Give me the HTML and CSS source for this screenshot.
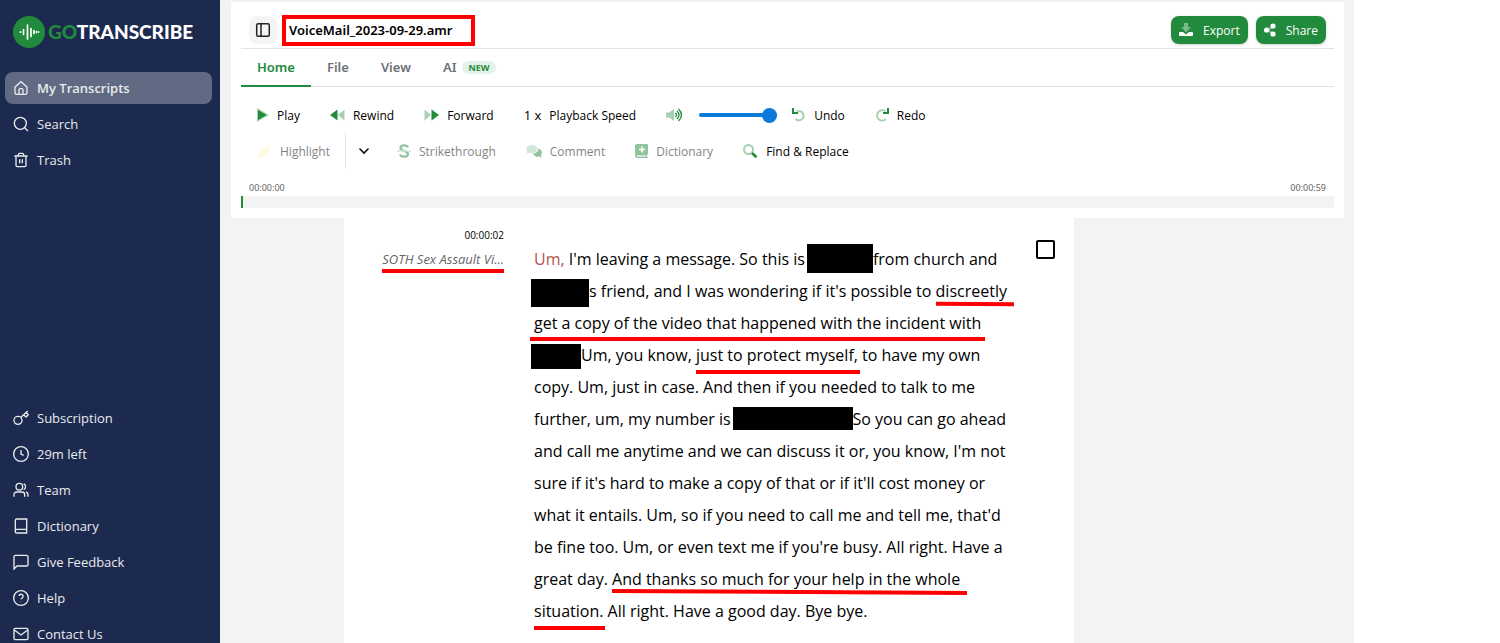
FILE: index.html
```
<!DOCTYPE html>
<html lang="en">
<head>
    <meta charset="UTF-8">
    <meta name="viewport" content="width=device-width, initial-scale=1.0">
    <title>VoiceMail_2023-09-29.amr - GoTranscribe</title>
    <link rel="stylesheet" href="styles.css">
</head>

<body>
    <aside class="sidebar">
        <a class="logo" href="#">
            <svg width="32" height="32" viewBox="0 0 32 32">
                <circle cx="16" cy="16" r="16" fill="#218a3c"/>
                <path d="M7.500 15.800v.4M10.500 13.500v5M14.500 9v14M18 12.500v8M21 14.500v3M23.500 15.500v1M25.500 15.900v.2" stroke="#fff" stroke-width="1.700" stroke-linecap="round"/>
            </svg>
            <span class="logo-text"><span class="go">GO</span>TRANSCRIBE</span>
        </a>
        <nav class="menu">
            <a class="active" href="#">
                <svg viewBox="0 0 24 24"><path d="M3 10.500 12 2.500l9 8V19a2.500 2.500 0 0 1-2.500 2.500h-13A2.500 2.500 0 0 1 3 19z"/><path d="M9 21v-6a2 2 0 0 1 2-2h2a2 2 0 0 1 2 2v6"/></svg>
                My Transcripts
            </a>
            <a href="#">
                <svg viewBox="0 0 24 24"><circle cx="11" cy="11" r="9"/><path d="m17.500 17.500 5 5"/></svg>
                Search
            </a>
            <a href="#">
                <svg viewBox="0 0 24 24"><path d="M2 6h20M4.500 6v14a2 2 0 0 0 2 2h11a2 2 0 0 0 2-2V6M8 6V4a2 2 0 0 1 2-2h4a2 2 0 0 1 2 2v2M10 11v6M14 11v6"/></svg>
                Trash
            </a>
        </nav>
        <nav class="menu bottom">
            <a href="#">
                <svg viewBox="0 0 24 24"><circle cx="7.500" cy="15.500" r="6"/><path d="M12 11 22 1.500M16 7l3.500 3.500L23 7l-3.500-3.500"/></svg>
                Subscription
            </a>
            <a href="#">
                <svg viewBox="0 0 24 24"><circle cx="12" cy="12" r="11"/><path d="M12 6v6l4 2"/></svg>
                29m left
            </a>
            <a href="#">
                <svg viewBox="0 0 24 24"><circle cx="9.500" cy="7" r="5"/><path d="M1.500 22v-3a4 4 0 0 1 4-4h8a4 4 0 0 1 4 4v3M16 2.500a5 5 0 0 1 0 9M22.500 22v-3a4 4 0 0 0-3-4"/></svg>
                Team
            </a>
            <a href="#">
                <svg viewBox="0 0 24 24"><path d="M3.500 20V4A2.500 2.500 0 0 1 6 1.500h14.500v21H6A2.500 2.500 0 0 1 6 17h14.500"/></svg>
                Dictionary
            </a>
            <a href="#">
                <svg viewBox="0 0 24 24"><path d="M22.500 16a2 2 0 0 1-2 2H6l-4.500 4.500V4a2 2 0 0 1 2-2h17a2 2 0 0 1 2 2z"/></svg>
                Give Feedback
            </a>
            <a href="#">
                <svg viewBox="0 0 24 24"><circle cx="12" cy="12" r="11"/><path d="M9 9a3 3 0 0 1 6 1c0 2-3 2.500-3 4M12 17.500v.5"/></svg>
                Help
            </a>
            <a href="#">
                <svg viewBox="0 0 24 24"><rect x="1.500" y="3.500" width="21" height="17" rx="2"/><path d="m2 6 10 7.500L22 6"/></svg>
                Contact Us
            </a>
        </nav>
    </aside>

    <main class="content">
        <header class="panel">
            <div class="title-row">
                <button class="toggle" aria-label="Toggle sidebar">
                    <svg width="16" height="16" viewBox="0 0 16 16" fill="none" stroke="#222" stroke-width="1.500"><rect x="1.700" y="1.700" width="12.600" height="12.600" rx="1.500"/><path d="M6 2v12"/></svg>
                </button>
                <h1 class="file-name">VoiceMail_2023-09-29.amr</h1>
                <div class="actions">
                    <button class="btn">
                        <svg width="14" height="14" viewBox="0 0 14 14" fill="#fff"><path opacity=".4" d="M5 0h4v4h3L7 9.500 2 4h3z"/><path d="M1 9h3l3 2.500L10 9h3a1 1 0 0 1 1 1v2a1 1 0 0 1-1 1H1a1 1 0 0 1-1-1v-2a1 1 0 0 1 1-1z"/></svg>
                        Export
                    </button>
                    <button class="btn">
                        <svg width="12" height="14" viewBox="0 0 12 14" fill="#fff"><path opacity=".4" d="m3 6 6-4 1 2-6 4zm0 2 6 4 1-2-6-4z"/><circle cx="2.600" cy="7" r="2.600"/><circle cx="9" cy="3" r="2.600"/><circle cx="9" cy="11" r="2.600"/></svg>
                        Share
                    </button>
                </div>
            </div>

            <nav class="tabs">
                <a class="current" href="#">Home</a>
                <a href="#">File</a>
                <a href="#">View</a>
                <a href="#">AI <span class="badge">NEW</span></a>
            </nav>

            <div class="toolbar">
                <div class="tools">
                    <button>
                        <svg width="12" height="14" viewBox="0 0 12 14"><path fill="#a6d0b1" d="M0 0l12 7-12 7z"/><path fill="#218a3c" d="M1 2 9.500 7 1 12z"/></svg>
                        Play
                    </button>
                    <button>
                        <svg width="15" height="12" viewBox="0 0 15 12"><path fill="#a6d0b1" d="M14.500 .5v11L8 6z"/><path fill="#218a3c" d="M7.500 .5v11L0 6z"/></svg>
                        Rewind
                    </button>
                    <button>
                        <svg width="15" height="12" viewBox="0 0 15 12"><path fill="#a6d0b1" d="M.5 .5v11L7 6z"/><path fill="#218a3c" d="M7.500 .5v11L15 6z"/></svg>
                        Forward
                    </button>
                    <button><span class="rate">1 x</span> Playback Speed</button>
                    <label class="volume">
                        <svg width="17" height="14" viewBox="0 0 17 14"><path fill="#a6d0b1" d="M0 4.500h3L8 1v12L3 9.500H0z"/><path fill="none" stroke="#218a3c" stroke-width="1.300" d="M9.500 5q2 2 0 4M11 3q4 4 0 8M12.500 1q6 6 0 12"/></svg>
                        <input type="range" min="0" max="100" value="100" aria-label="Volume">
                    </label>
                    <button>
                        <svg width="14" height="14" viewBox="0 0 14 14" fill="none" stroke-width="2"><path stroke="#a6d0b1" d="M4.500 3.300h4a4.700 4.700 0 1 1-5 7.700"/><path stroke="#218a3c" d="M1 0v5h5"/></svg>
                        Undo
                    </button>
                    <button>
                        <svg width="14" height="14" viewBox="0 0 14 14" fill="none" stroke-width="2"><path stroke="#a6d0b1" d="M10.500 3.300A5.200 5.200 0 1 0 11 11"/><path stroke="#218a3c" d="M13 0v5H8"/></svg>
                        Redo
                    </button>
                </div>
                <div class="tools">
                    <button disabled>
                        <svg width="15" height="14" viewBox="0 0 15 14"><path fill="#fffbc8" d="M3 7 12 1l2 2-5 8-5 0z"/><path fill="#fff6a0" d="m3 8 4 4-6 1z"/></svg>
                        Highlight
                    </button>
                    <button class="more" aria-label="Highlight colours">
                        <svg width="12" height="8" viewBox="0 0 12 8" fill="none" stroke="#111" stroke-width="1.600"><path d="m1.500 1.500 4.500 4.500 4.500-4.500"/></svg>
                    </button>
                    <button disabled>
                        <svg width="14" height="14" viewBox="0 0 14 14" fill="none"><path stroke="#218a3c" stroke-width="2.200" d="M11 3.500C10 .5 3.500 .5 3.500 4c0 3.500 7.500 2.500 7.500 6 0 3.500-7 3.500-8 .5"/><path stroke="#a6d0b1" stroke-width="1.500" d="M0 7h14"/></svg>
                        Strikethrough
                    </button>
                    <button disabled>
                        <svg width="16" height="14" viewBox="0 0 16 14"><path fill="#218a3c" d="M7 9.500C11 9 12.500 7 12.300 4.500 16 5.500 17 9 14.800 11l1.200 2.500-3-1C10 13.200 8 12 7 9.500z"/><path fill="#a6d0b1" d="M5.700 1C9 1 11.300 2.800 11.300 5S9 9 5.700 9L3 8.700.5 9.500l.8-2C-1.300 4.500 1 1 5.700 1z"/></svg>
                        Comment
                    </button>
                    <button disabled>
                        <svg width="13" height="14" viewBox="0 0 13 14"><path fill="#218a3c" d="M2.500 0H12a1 1 0 0 1 1 1v9l-1 1v2h1v1H2.500A2.500 2.500 0 0 1 0 11.500v-9A2.500 2.500 0 0 1 2.500 0z"/><path fill="#a6d0b1" d="M2.500 11H11v2H2.500a1 1 0 0 1 0-2z"/><path stroke="#fff" stroke-width="1.600" d="M7 2.500v6M4 5.500h6"/></svg>
                        Dictionary
                    </button>
                    <button>
                        <svg width="15" height="14" viewBox="0 0 15 14" fill="none"><circle cx="5.500" cy="5.500" r="4.500" stroke="#a6d0b1" stroke-width="2"/><path stroke="#218a3c" stroke-width="2.600" d="m9 9 4.500 4.300"/></svg>
                        Find &amp; Replace
                    </button>
                </div>
            </div>

            <div class="timeline">
                <div class="times"><span>00:00:00</span><span>00:00:59</span></div>
                <div class="track"></div>
            </div>
        </header>

        <section class="transcript">
            <div class="speaker">
                <time>00:00:02</time>
                <div class="line name">SOTH Sex Assault Vi...</div>
            </div>
            <p class="text">
                <span class="filler">Um,</span> I'm leaving a message. So this is<span class="redact person"></span>from church and<br>
                <span class="redact start friend"></span>s friend, and I was wondering if it's possible to <span class="line tilt">discreetly</span><br>
                <span class="line wide">get a copy of the video that happened with the incident with</span><br>
                <span class="redact start other"></span>Um, you know, <span class="line low">just to protect myself,</span> to have my own<br>
                copy. Um, just in case. And then if you needed to talk to me<br>
                further, um, my number is<span class="redact phone"></span>So you can go ahead<br>
                and call me anytime and we can discuss it or, you know, I'm not<br>
                sure if it's hard to make a copy of that or if it'll cost money or<br>
                what it entails. Um, so if you need to call me and tell me, that'd<br>
                be fine too. Um, or even text me if you're busy. All right. Have a<br>
                great day. <span class="line tilt">And thanks so much for your help in the whole</span><br>
                <span class="line low">situation.</span> All right. Have a good day. Bye bye.
            </p>
            <input class="done" type="checkbox" aria-label="Mark paragraph as checked">
        </section>
    </main>
</body>
</html>
```
FILE: styles.css
```
*{
    box-sizing: border-box;
}
body{
    display: flex;
    height: 100vh;
    margin: 0;
    overflow: hidden;
    background-color: #fff;
    color: #000;
    font-family: "Open Sans", "Noto Sans", sans-serif;
}
a{
    color: inherit;
    text-decoration: none;
}
button{
    display: flex;
    align-items: center;
    border: 0;
    padding: 0;
    background: none;
    color: inherit;
    font-family: inherit;
}
svg{
    flex: none;
}
/*sidebar styles*/
.sidebar{
    display: flex;
    flex-direction: column;
    flex: none;
    width: 220px;
    padding: 16px 8px 0 5px;
    overflow: hidden;
    background-color: #1d2a4f;
    color: #e8eaed;
}
.logo{
    display: flex;
    align-items: center;
    gap: 3px;
    height: 32px;
    margin: 0 0 24px 8px;
}
.logo-text{
    color: #fff;
    font-family: Lato, sans-serif;
    font-size: 19px;
    font-weight: 900;
    line-height: 32px;
}
.go{
    color: #218a3c;
}
.menu{
    display: flex;
    flex-direction: column;
    gap: 4px;
}
.menu a{
    display: flex;
    align-items: center;
    gap: 8px;
    height: 32px;
    padding: 0 8px;
    border-radius: 8px;
    font-size: 13px;
}
.menu svg{
    width: 16px;
    height: 16px;
    fill: none;
    stroke: currentColor;
    stroke-width: 2;
}
.menu .active{
    background-color: #606b83;
    font-weight: 600;
}
.bottom{
    margin-top: auto;
    margin-bottom: -7px;
}
/*header styles*/
.content{
    display: flex;
    flex-direction: column;
    flex: 1;
    margin-right: 146px;
    padding: 2px 10px 0 11px;
    background-color: #f3f3f3;
}
.panel{
    padding: 0 10px 10px;
    background-color: #fff;
}
.title-row{
    display: flex;
    align-items: center;
    gap: 5px;
    height: 47px;
    padding: 10px 8px 0;
    border-bottom: 1px solid #e2e2e2;
}
.toggle{
    justify-content: center;
    width: 28px;
    height: 28px;
    border-radius: 8px;
    background-color: #f4f4f4;
}
.file-name{
    width: 193px;
    height: 31px;
    margin: 0;
    padding-left: 3px;
    border: 4px solid #f00;
    font-family: "Noto Sans", sans-serif;
    font-size: 13px;
    font-weight: 600;
    line-height: 22px;
}
.actions{
    display: flex;
    gap: 8px;
    margin-left: auto;
}
.btn{
    gap: 10px;
    height: 28px;
    padding: 0 8px;
    border-radius: 8px;
    background-color: #218a3c;
    box-shadow: 0 1px 3px rgba(0, 0, 0, 0.2);
    color: #fff;
    font-size: 12px;
    font-weight: 500;
}
.tabs{
    display: flex;
    height: 38px;
    border-bottom: 1px solid #e2e2e2;
    color: #6f7178;
    font-family: "Noto Sans", sans-serif;
    font-size: 13px;
    font-weight: 600;
}
.tabs a{
    display: flex;
    align-items: center;
    gap: 6px;
    height: 38px;
    padding: 0 16px;
    border-bottom: 2px solid transparent;
}
.tabs .current{
    border-color: #218a3c;
    color: #218a3c;
}
.badge{
    padding: 0 6px;
    border-radius: 7px;
    background-color: #e5f2e9;
    color: #218a3c;
    font-size: 9px;
    font-weight: 700;
    line-height: 13px;
}
.toolbar{
    padding: 10px 0 0 1px;
}
.tools{
    display: flex;
    height: 36px;
}
.tools button{
    gap: 8px;
    padding: 0 15px;
    font-size: 12px;
    font-weight: 500;
}
.tools button:disabled{
    opacity: 0.5;
}
.tools .more{
    padding: 0 12px;
    border-left: 1px solid #e2e2e2;
}
.rate{
    font-size: 13px;
}
.volume{
    display: flex;
    align-items: center;
    gap: 16px;
    padding-left: 15px;
}
.volume input{
    appearance: none;
    width: 78px;
    height: 4px;
    margin: 0;
    border-radius: 2px;
    background-color: #0a79d8;
}
.volume input::-webkit-slider-thumb{
    appearance: none;
    width: 15px;
    height: 15px;
    border-radius: 50%;
    background-color: #0a79d8;
}
.timeline{
    padding-top: 11px;
}
.times{
    display: flex;
    justify-content: space-between;
    padding: 0 8px 1px;
    color: #666;
    font-family: "Noto Sans", sans-serif;
    font-size: 9px;
    line-height: 15px;
}
.track{
    height: 12px;
    border-left: 2px solid #218a3c;
    background-color: #f3f3f3;
}
/*transcript styles*/
.transcript{
    display: flex;
    flex: 1;
    width: 730px;
    min-height: 0;
    margin-left: 113px;
    padding-top: 9px;
    background-color: #fff;
}
.speaker{
    width: 160px;
    text-align: right;
    font-size: 10px;
    line-height: 16px;
}
.speaker .name{
    width: 122px;
    margin: 7px 0 0 38px;
    color: #666;
    font-size: 13px;
    font-style: italic;
    line-height: 18px;
    white-space: nowrap;
}
.text{
    width: 502px;
    margin: 16px 0 0 30px;
    font-size: 16px;
    line-height: 32px;
    white-space: nowrap;
}
.filler{
    color: #b5524c;
}
.redact{
    display: inline-block;
    margin-left: 2px;
    background-color: #000;
    vertical-align: middle;
}
.start{
    margin-left: -3px;
}
.person{
    width: 66px;
    height: 29px;
    margin-top: -2px;
    margin-bottom: 2px;
}
.friend{
    width: 58px;
    height: 28px;
}
.other{
    width: 50px;
    height: 25px;
}
.phone{
    width: 120px;
    height: 23px;
    margin-top: -2px;
    margin-bottom: 2px;
}
/*red pen under the words*/
.line{
    position: relative;
}
.line::after{
    content: "";
    position: absolute;
    left: 0;
    right: 0;
    bottom: -5px;
    height: 4px;
    background-color: #f00;
}
.tilt::after{
    right: -7px;
    bottom: -4px;
    transform: rotate(0.3deg);
}
.wide::after{
    left: -4px;
    right: -4px;
    bottom: -7px;
}
.low::after{
    right: -2px;
    bottom: -8px;
}
.done{
    appearance: none;
    width: 19px;
    height: 19px;
    margin: 13px 0 0;
    border: 2px solid #000;
    border-radius: 2px;
}
```
